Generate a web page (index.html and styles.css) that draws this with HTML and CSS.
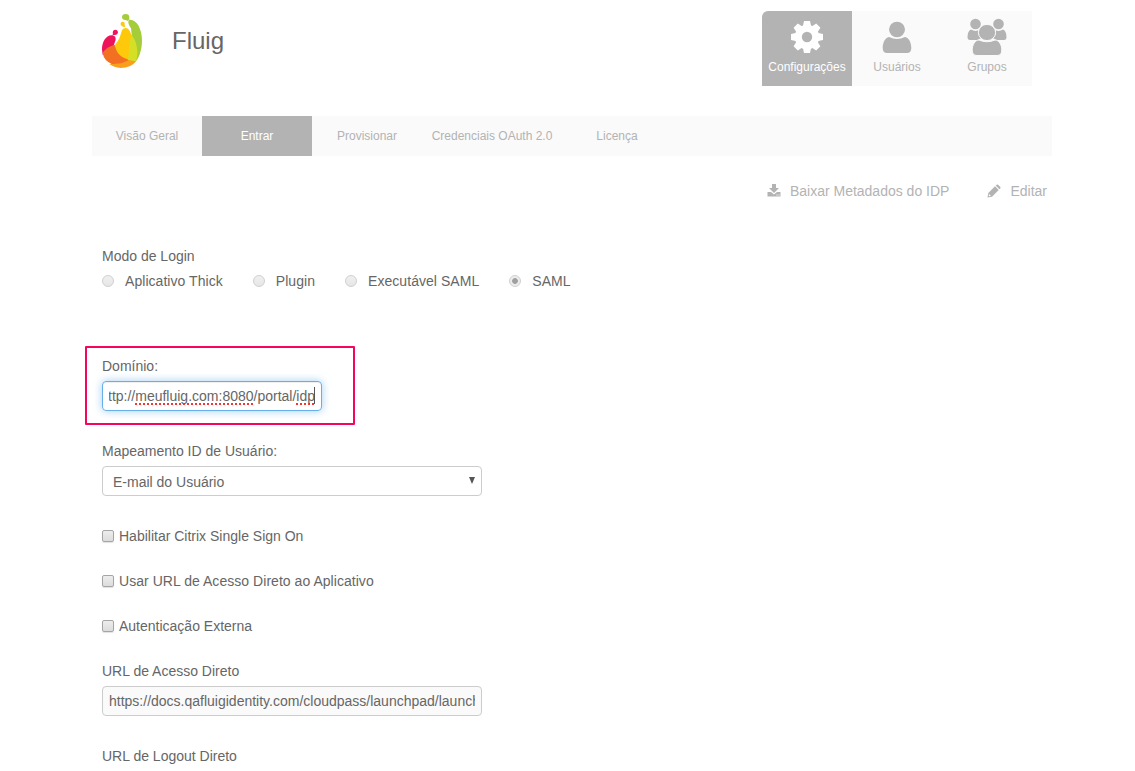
FILE: index.html
```html
<!DOCTYPE html>
<html lang="pt-BR">
<head>
    <meta charset="UTF-8">
    <meta name="viewport" content="width=device-width, initial-scale=1.0">
    <title>Fluig</title>
    <link rel="stylesheet" href="styles.css">
</head>
<body>
    <div class="container">
        <header class="header">
            <svg class="logo" viewBox="30 21 135 174">
                <path fill="#ee145b" d="M36 134C35 113 47 91 65 91C75 91 79 98 76 108L70 124L48 150L38 149Z"/>
                <circle fill="#ee145b" cx="76" cy="82" r="7.5"/>
                <path fill="#ee145b" d="M69 83L80 87L74 90L68 90Z"/>
                <path fill="#a5cd39" d="M116 45C138 40 156 70 156 106C156 133 149 155 138 169L116 150L126 96L123 70Q112 55 116 45Z"/>
                <ellipse fill="#a5cd39" cx="107" cy="36" rx="11" ry="9"/>
                <path fill="#a5cd39" d="M105 43L117 37L118 43L112 48Z"/>
                <path fill="#f9a01b" d="M58 177Q96 178 119 163L139 168Q123 189 92 189Q72 188 58 177Z"/>
                <path fill="#f36f21" d="M38 145Q47 126 74 119Q85 148 120 163Q99 179 65 177Q42 167 38 145Z"/>
                <path fill="#ffc90b" d="M96 76C102 66 114 66 119 78L126 92L130 135L120 164C94 160 77 143 75 119C89 105 92 88 96 76Z"/>
                <circle fill="#ffc90b" cx="98" cy="57" r="6.5"/>
                <path fill="#ffc90b" d="M96 62L104 59L105 66L100 66Z"/>
                <path fill="#d5df26" d="M125 90C142 109 146 148 138 168Q128 168 113 164C121 142 113 116 125 90Z"/>
            </svg>
            <h1>Fluig</h1>
            <nav class="main-nav">
                <a class="nav-item active">
                    <svg viewBox="0 0 40 40">
                        <g fill="#fff">
                            <circle cx="20" cy="20" r="12.2"/>
                            <path id="teeth" d="M17 4h6l1.5 7h-9zM17 36h6l1.5-7h-9zM4 17v6l7 1.5v-9zM36 17v6l-7 1.5v-9z"/>
                            <use href="#teeth" transform="rotate(45 20 20)"/>
                        </g>
                        <circle cx="20" cy="20" r="5.2" fill="#b3b3b3"/>
                    </svg>
                    <span>Configurações</span>
                </a>
                <a class="nav-item">
                    <svg viewBox="0 0 40 40" fill="#b3b3b3">
                        <ellipse cx="20" cy="12.500" rx="8" ry="7.700"/>
                        <path d="M12 20Q20 24 28 20C32 20.500 34.300 26 34.300 31Q34.300 36 30 36H10Q5.700 36 5.700 31C5.700 26 8 20.500 12 20Z"/>
                    </svg>
                    <span>Usuários</span>
                </a>
                <a class="nav-item">
                    <svg viewBox="0 0 40 40" fill="#b3b3b3">
                        <circle cx="8.5" cy="7" r="5.3"/>
                        <circle cx="31.5" cy="7" r="5.3"/>
                        <path d="M4 12.500Q8 15 11.200 13.300Q10.500 18 14 21L10.500 23H3Q.5 23 .5 20Q.5 14 4 12.500Z"/>
                        <path d="M36 12.500Q32 15 28.800 13.300Q29.500 18 26 21L29.500 23H37Q39.500 23 39.500 20Q39.500 14 36 12.500Z"/>
                        <g stroke="#fafafa">
                            <ellipse cx="20" cy="15.500" rx="8.600" ry="8.100"/>
                            <path d="M12 23Q20 26.500 28 23C32 23 34.800 28 34.800 33Q34.800 38.500 30 38.500H10Q5.200 38.500 5.200 33C5.200 28 8 23 12 23Z"/>
                        </g>
                    </svg>
                    <span>Grupos</span>
                </a>
            </nav>
        </header>

        <nav class="tabs">
            <a>Visão Geral</a>
            <a class="active">Entrar</a>
            <a>Provisionar</a>
            <a class="wide">Credenciais OAuth 2.0</a>
            <a>Licença</a>
        </nav>

        <div class="actions">
            <a class="download">
                <svg viewBox="0 0 14 14" fill="#b3b3b3"><path d="M5 0h4v4h3L7 9 2 4h3zM.5 8H4l3 2.500L10 8h3.500v4.500H.5z"/><path d="M9.500 10.500h1v1h-1zM11.500 10.500h1v1h-1z" fill="#fff"/></svg>
                <span>Baixar Metadados do IDP</span>
            </a>
            <a class="edit">
                <svg viewBox="0 0 14 14" fill="#b3b3b3"><path d="M.5 13.500l.8-4.500L8 2.300l3.700 3.700L5 12.700zM8.700 1.600l.9-.9q.8-.6 1.500 0l2.200 2.200q.6.700 0 1.500l-.9.900z"/><path d="M2 10l2 2-1.500.3-.8-.8z" fill="#fff"/></svg>
                <span>Editar</span>
            </a>
        </div>

        <form class="form">
            <div class="group login-mode">
                <label>Modo de Login</label>
                <div class="radios">
                    <span class="radio"><i></i>Aplicativo Thick</span>
                    <span class="radio"><i></i>Plugin</span>
                    <span class="radio"><i></i>Executável SAML</span>
                    <span class="radio checked"><i></i>SAML</span>
                </div>
            </div>
            <div class="group">
                <div class="highlight"></div>
                <label>Domínio:</label>
                <div class="field focused"><span class="value">ttp://<u>meufluig.com:8080</u>/portal/<u>idp</u></span></div>
            </div>
            <div class="group">
                <label>Mapeamento ID de Usuário:</label>
                <div class="field select"><span>E-mail do Usuário</span><svg viewBox="0 0 6 7"><path d="M0 0h6L3 7z" fill="#555"/></svg></div>
            </div>
            <div class="check"><i></i><span>Habilitar Citrix Single Sign On</span></div>
            <div class="check direct"><i></i><span>Usar URL de Acesso Direto ao Aplicativo</span></div>
            <div class="check"><i></i><span>Autenticação Externa</span></div>
            <div class="group">
                <label>URL de Acesso Direto</label>
                <div class="field readonly"><span class="value">https://docs.qafluigidentity.com/cloudpass/launchpad/launch</span></div>
            </div>
            <label>URL de Logout Direto</label>
        </form>
    </div>
</body>
</html>
```
FILE: styles.css
```css
body {
    margin: 0;
    font-family: "Liberation Sans", Arial, sans-serif;
    font-size: 14px;
    line-height: 20px;
    color: #666;
    background-color: #fff;
}
.container {
    width: 960px;
    margin-left: 92px;
    padding-top: 11px;
}
.header {
    display: flex;
    height: 75px;
}
.logo {
    width: 45px;
    height: 58px;
    margin: 1px 0 0 8px;
}
h1 {
    margin: 10px 0 0 27px;
    font-size: 24px;
    font-weight: normal;
    line-height: 40px;
}
.main-nav {
    display: flex;
    margin-left: auto;
    margin-right: 20px;
    background-color: #fafafa;
    border-radius: 6px 0 0 0;
}
.nav-item {
    width: 90px;
    text-align: center;
    font-size: 12px;
    color: #b3b3b3;
}
.nav-item svg {
    display: block;
    width: 40px;
    height: 40px;
    margin: 6px auto 0;
}
.nav-item.active {
    color: #fff;
    background-color: #b3b3b3;
    border-radius: 6px 0 0 0;
}
.tabs {
    display: flex;
    height: 40px;
    margin-top: 30px;
    background-color: #fafafa;
}
.tabs a {
    width: 110px;
    line-height: 40px;
    font-size: 12px;
    text-align: center;
    color: #b3b3b3;
}
.tabs .wide {
    width: 140px;
}
.tabs .active {
    color: #fff;
    background-color: #b3b3b3;
}
.actions {
    display: flex;
    justify-content: flex-end;
    gap: 38px;
    margin: 25px 5px 0 0;
    color: #b3b3b3;
}
.actions a {
    display: flex;
    align-items: center;
}
.actions svg {
    width: 14px;
    height: 14px;
    margin-right: 9px;
}
.form {
    margin: 45px 0 0 10px;
}
label {
    display: block;
    margin-bottom: 5px;
}
.group {
    position: relative;
    margin-bottom: 30px;
}
.login-mode {
    margin-bottom: 65px;
}
.radios {
    display: flex;
    gap: 30px;
    letter-spacing: 0.05px;
}
.radio {
    display: flex;
    align-items: center;
}
.radio i {
    box-sizing: border-box;
    width: 12px;
    height: 12px;
    margin-right: 11px;
    border: 1px solid #d0d0d0;
    border-radius: 50%;
    background: linear-gradient(#f0f0f0, #e6e6e6);
}
.radio.checked i {
    background: radial-gradient(circle, #a0a0a0 2.5px, #ececec 3.2px);
}
/* marcação em volta do campo Domínio */
.highlight {
    position: absolute;
    top: -10px;
    left: -17px;
    width: 266px;
    height: 75px;
    border: 2px solid #f5055c;
    border-radius: 1px;
}
.field {
    box-sizing: border-box;
    width: 380px;
    height: 30px;
    padding: 0 6px;
    border: 1px solid #ccc;
    border-radius: 4px;
    line-height: 28px;
}
.field .value {
    display: block;
    overflow: hidden;
    white-space: nowrap;
}
.focused {
    width: 220px;
    border-color: #66afe9;
    box-shadow: inset 0 1px 1px rgba(0, 0, 0, 0.07), 0 0 8px rgba(102, 175, 233, 0.6);
}
.focused .value {
    position: relative;
    text-indent: -1px;
}
.focused .value::after {
    content: "";
    position: absolute;
    top: 5px;
    right: 0;
    width: 1px;
    height: 17px;
    background-color: #555;
}
.focused u {
    text-decoration: underline dotted #ff3030 2px;
    text-decoration-skip-ink: none;
    text-underline-offset: 2px;
}
.select {
    display: flex;
    align-items: center;
    justify-content: space-between;
    padding: 2px 6px 0 10px;
}
.select svg {
    width: 6px;
    height: 7px;
    margin-top: -3px;
}
.readonly {
    background-color: #fafafa;
}
.check {
    display: flex;
    align-items: center;
    margin-bottom: 25px;
}
.check.direct {
    letter-spacing: 0.04px;
}
.check i {
    box-sizing: border-box;
    width: 12px;
    height: 12px;
    margin-right: 5px;
    border: 1px solid #a5a5a5;
    border-radius: 2px;
    background: linear-gradient(#ededed, #dcdcdc);
    box-shadow: 0 1px 1px rgba(0, 0, 0, 0.12);
}
```
